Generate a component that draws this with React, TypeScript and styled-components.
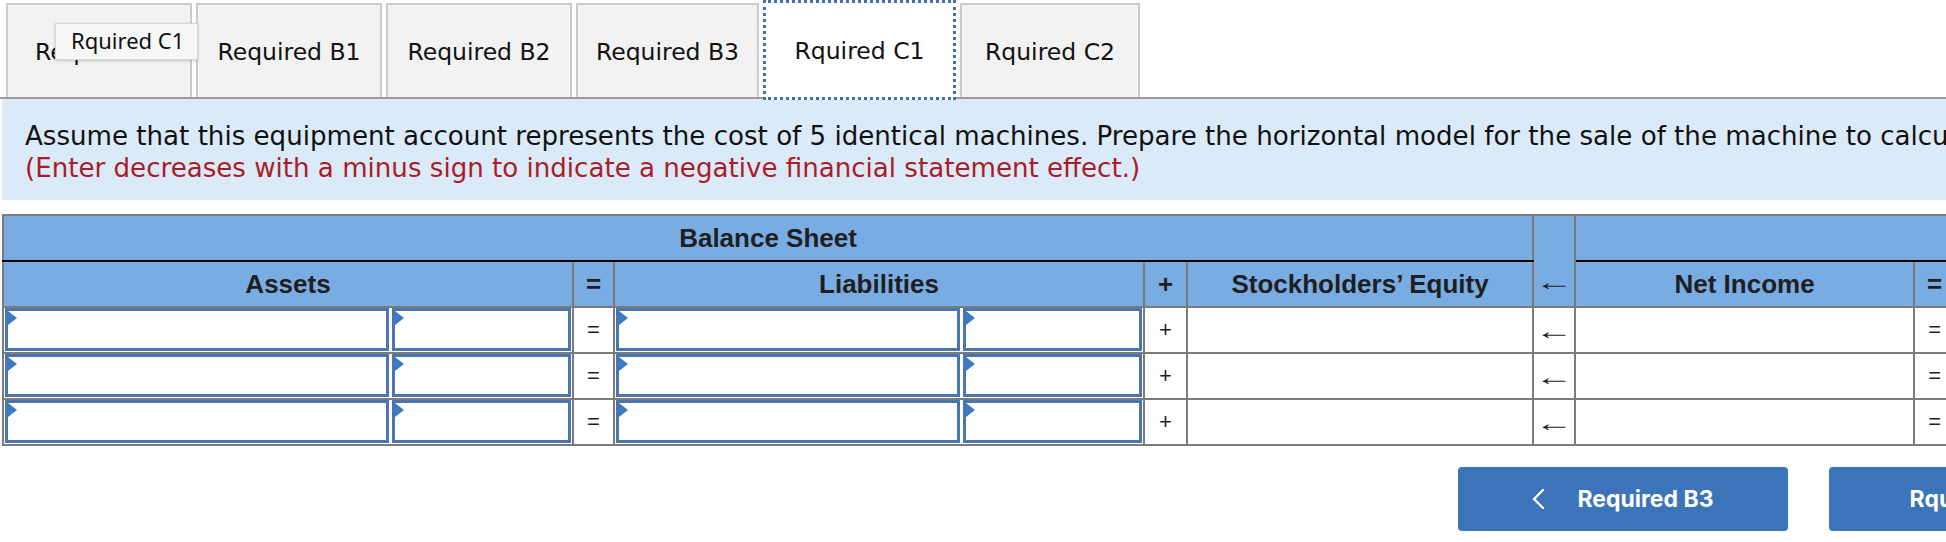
import React from "react";
import styled, {createGlobalStyle} from "styled-components";

const GlobalStyle = createGlobalStyle`
  html, body {
    margin: 0;
    padding: 0;
    background: #fff;
    overflow: hidden;
  }
  body {
    font-family: "DejaVu Sans", Verdana, sans-serif;
    color: #111;
  }
`

interface TabProps {
  active?: boolean
  size: number
}

interface CellProps {
  tone?: 'head' | 'body'
  bold?: boolean
}

const Page = styled.div`
  position: relative;
  width: 2400px;
  height: 542px;
`

const TabBar = styled.div`
  display: flex;
  align-items: flex-end;
  gap: 4px;
  height: 94px;
  padding: 3px 0 0 6px;
  border-bottom: 2px solid #9b9b9b;
`

const Tab = styled.div<TabProps>`
  display: flex;
  align-items: center;
  justify-content: center;
  box-sizing: border-box;
  width: ${p => p.size}px;
  height: ${p => p.active ? 100 : 94}px;
  margin-bottom: ${p => p.active ? -3 : 0}px;
  padding-top: 2px;
  background: ${p => p.active ? '#fff' : '#f2f2f2'};
  border: ${p => p.active ? '3px dotted #3f6fb2' : '2px solid #cbcbcb'};
  border-bottom: ${p => p.active ? '3px dotted #3f6fb2' : 'none'};
  font-size: 23.5px;
  color: #111;
  white-space: nowrap;
  overflow: hidden;
`

const Tooltip = styled.div`
  position: absolute;
  left: 55px;
  top: 23px;
  height: 37px;
  padding: 0 13px 3px 15px;
  box-sizing: border-box;
  display: flex;
  align-items: center;
  background: #f7f7f7;
  border: 1px solid #d6d6d6;
  box-shadow: 0 1px 3px rgba(0, 0, 0, 0.18);
  font-family: "Noto Sans", sans-serif;
  font-size: 22px;
  color: #111;
  white-space: nowrap;
`

const Instructions = styled.div`
  margin-left: 2px;
  height: 101px;
  box-sizing: border-box;
  padding: 21px 0 0 23px;
  background: #dbeaf8;
  font-size: 26.1px;
  line-height: 32px;
  white-space: nowrap;
`

const Warning = styled.div`
  color: #a81d27;
`

const Sheet = styled.table`
  margin: 14px 0 0 2px;
  border-collapse: collapse;
  table-layout: fixed;
  width: 2352px;
  font-family: "Liberation Sans", Arial, sans-serif;
`

const Cell = styled.td<CellProps>`
  border: 2px solid #7b7b7b;
  padding: 0;
  height: 44px;
  text-align: center;
  vertical-align: middle;
  background: ${p => p.tone === 'head' ? '#79ace3' : '#fff'};
  font-size: ${p => p.bold ? 26 : 22}px;
  font-weight: ${p => p.bold ? 700 : 400};
  color: #1f1f1f;
  white-space: nowrap;
`

const TopCell = styled(Cell)`
  border-bottom: 2px solid #000;
  height: 44px;
`

const ArrowHead = styled(Cell)`
  vertical-align: bottom;
  padding-bottom: 10px;
`

const Arrow = styled.span`
  display: inline-block;
  transform: scaleX(1.6);
  font-family: "Liberation Serif", "DejaVu Serif", serif;
  font-size: 24px;
  font-weight: 400;
  color: #222;
  padding-top: 2px;
`

const Pair = styled.div`
  display: flex;
  gap: 3px;
  height: 44px;
  padding: 0 1px;
`

const Select = styled.div<{ grow?: boolean }>`
  position: relative;
  box-sizing: border-box;
  flex: ${p => p.grow ? '1 1 auto' : '0 0 179px'};
  height: 43px;
  border: 3px solid #4a76ad;
  background: #fff;

  &::before {
    content: "";
    position: absolute;
    left: 0;
    top: 0;
    border-top: 7px solid transparent;
    border-bottom: 7px solid transparent;
    border-left: 9px solid #3b7ac6;
  }
`

const Footer = styled.div`
  display: flex;
  justify-content: flex-end;
  gap: 41px;
  width: 2159px;
  margin-top: 21px;
`

const NavButton = styled.button`
  display: flex;
  align-items: center;
  justify-content: center;
  gap: 32px;
  width: 330px;
  height: 64px;
  border: none;
  border-radius: 4px;
  background: #3c74b9;
  color: #fff;
  font-family: Inter, "Noto Sans", sans-serif;
  font-weight: 700;
  font-size: 23px;
  cursor: pointer;
`

const Chevron = ({dir}: { dir: 'left' | 'right' }) => (
  <svg width="13" height="22" viewBox="0 0 13 22" fill="none">
    <path
      d={dir === 'left' ? 'M11 2 L2 11 L11 20' : 'M2 2 L11 11 L2 20'}
      stroke="#fff"
      strokeWidth="2.4"
      strokeLinecap="round"
      strokeLinejoin="round"
    />
  </svg>
)

const tabs = [
  {label: 'Required A', size: 186},
  {label: 'Required B1', size: 186},
  {label: 'Required B2', size: 186},
  {label: 'Required B3', size: 183},
  {label: 'Rquired C1', size: 193},
  {label: 'Rquired C2', size: 180},
]

const EntryRow = () => (
  <tr>
    <Cell><Pair><Select grow/><Select/></Pair></Cell>
    <Cell>=</Cell>
    <Cell><Pair><Select grow/><Select/></Pair></Cell>
    <Cell>+</Cell>
    <Cell/>
    <Cell><Arrow>←</Arrow></Cell>
    <Cell/>
    <Cell>=</Cell>
    <Cell/>
  </tr>
)

const App = () => {
  return (
    <Page>
      <GlobalStyle/>
      <TabBar>
        {tabs.map(t => (
          <Tab key={t.label} size={t.size} active={t.label === 'Rquired C1'}>{t.label}</Tab>
        ))}
      </TabBar>
      <Tooltip>Rquired C1</Tooltip>
      <Instructions>
        <div>Assume that this equipment account represents the cost of 5 identical machines. Prepare the horizontal model for the sale of the machine to calculate the gain or loss.</div>
        <Warning>(Enter decreases with a minus sign to indicate a negative financial statement effect.)</Warning>
      </Instructions>
      <Sheet>
        <colgroup>
          <col style={{width: 570}}/>
          <col style={{width: 41}}/>
          <col style={{width: 530}}/>
          <col style={{width: 43}}/>
          <col style={{width: 346}}/>
          <col style={{width: 42}}/>
          <col style={{width: 339}}/>
          <col style={{width: 41}}/>
          <col style={{width: 400}}/>
        </colgroup>
        <tbody>
          <tr>
            <TopCell tone="head" bold colSpan={5}>Balance Sheet</TopCell>
            <ArrowHead tone="head" rowSpan={2}><Arrow>←</Arrow></ArrowHead>
            <TopCell tone="head" bold colSpan={3}/>
          </tr>
          <tr>
            <Cell tone="head" bold>Assets</Cell>
            <Cell tone="head" bold>=</Cell>
            <Cell tone="head" bold>Liabilities</Cell>
            <Cell tone="head" bold>+</Cell>
            <Cell tone="head" bold>Stockholders’ Equity</Cell>
            <Cell tone="head" bold>Net Income</Cell>
            <Cell tone="head" bold>=</Cell>
            <Cell tone="head" bold/>
          </tr>
          <EntryRow/>
          <EntryRow/>
          <EntryRow/>
        </tbody>
      </Sheet>
      <Footer>
        <NavButton><Chevron dir="left"/>Required B3</NavButton>
        <NavButton>Rquired C2<Chevron dir="right"/></NavButton>
      </Footer>
    </Page>
  )
}

export default App
